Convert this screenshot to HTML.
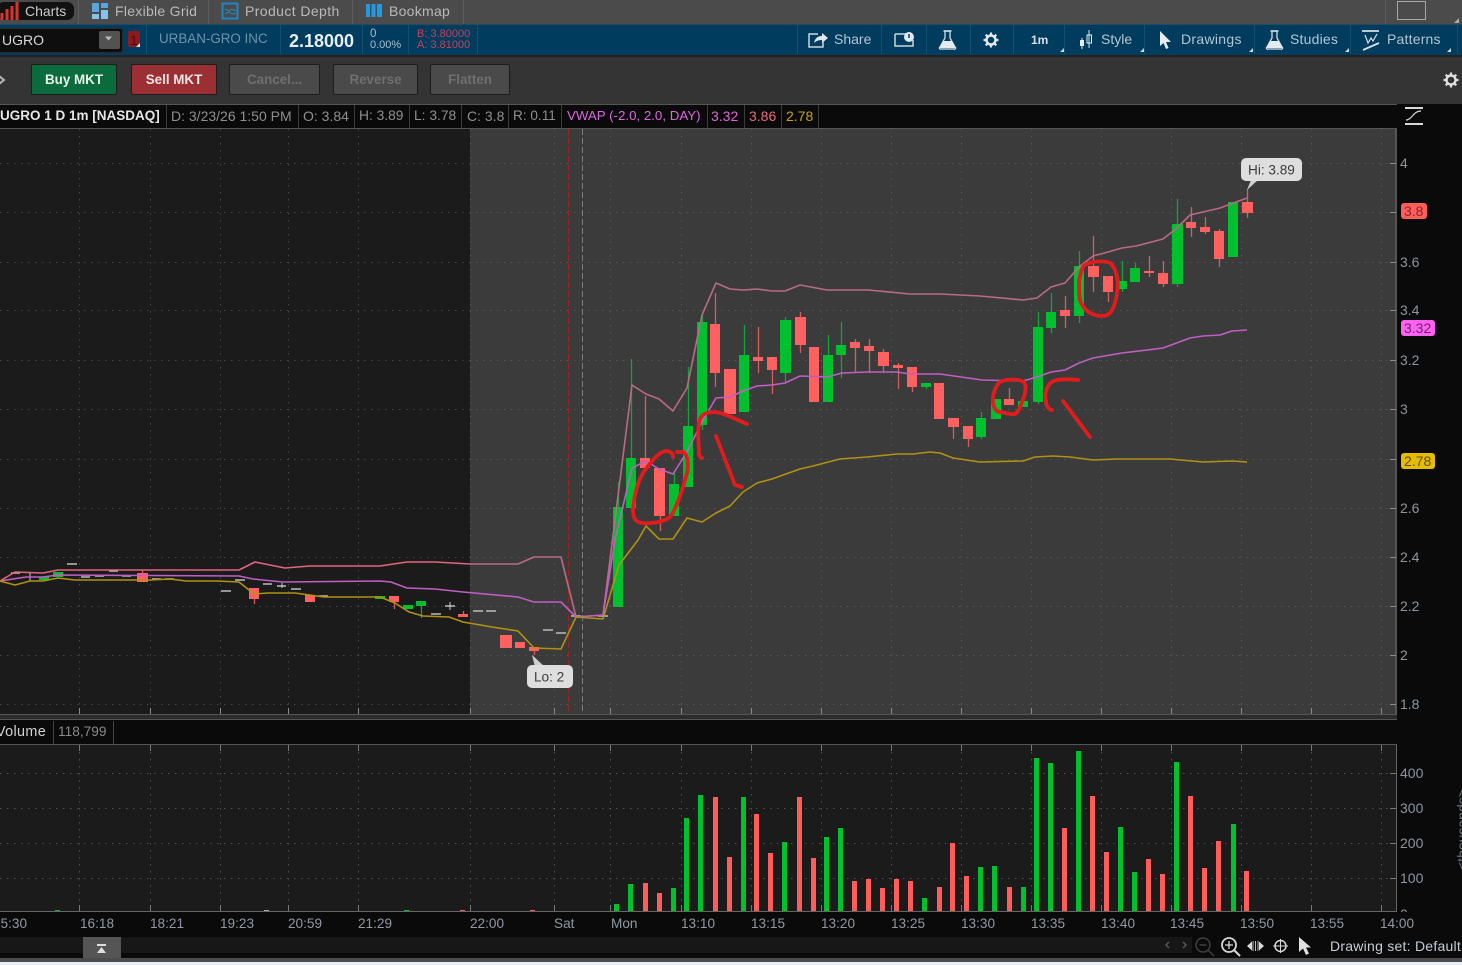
<!DOCTYPE html>
<html><head><meta charset="utf-8"><style>
html,body{margin:0;padding:0;background:#333;width:1462px;height:965px;overflow:hidden}
body{position:relative;font-family:"Liberation Sans",sans-serif;font-size:14px}
#w{position:absolute;left:0;top:0;width:1462px;height:965px;overflow:hidden;filter:blur(.35px)}
.a{position:absolute;white-space:nowrap;line-height:18px}
.r{position:absolute}
.b{position:absolute;top:64px;height:29px;line-height:29px;text-align:center;font-weight:bold;font-size:13.4px;border:1px solid #1c1c1c;border-radius:2px;background:#4a4a4a;color:#6f6f6f}
.h{top:107px;color:#8f8f8f}
.t{letter-spacing:.28px}
.u{letter-spacing:.2px}
.s{position:absolute;top:105px;height:23px;width:1px;background:#3c3c3c}
svg{position:absolute;left:0;top:0}
svg text{font-family:"Liberation Sans",sans-serif}
</style></head><body><div id="w">
<!-- tab bar -->
<div class="r" style="left:0;top:0;width:1462px;height:24px;background:#4b4b4b"></div>
<div class="r" style="left:-3px;top:2px;width:77px;height:18px;background:#111;border-radius:7px"></div>
<div class="r" style="left:78px;top:0;width:1px;height:24px;background:#5e5e5e"></div>
<div class="r" style="left:208px;top:0;width:1px;height:24px;background:#5e5e5e"></div>
<div class="r" style="left:352px;top:0;width:1px;height:24px;background:#5e5e5e"></div>
<div class="r" style="left:463px;top:0;width:1px;height:24px;background:#5e5e5e"></div>
<div class="r" style="left:1385px;top:0;width:1px;height:24px;background:#5e5e5e"></div>
<div class="a" style="left:25px;top:2px;color:#c9c9c9">Charts</div>
<div class="a t" style="left:115px;top:2px;color:#b9b9b9">Flexible Grid</div>
<div class="a t" style="left:245px;top:2px;letter-spacing:.4px;color:#b9b9b9">Product Depth</div>
<div class="a t" style="left:389px;top:2px;color:#b9b9b9">Bookmap</div>
<!-- blue bar -->
<div class="r" style="left:0;top:24px;width:1462px;height:31px;background:#003c5e;border-top:1px solid #234a60;box-sizing:border-box"></div>
<div class="r" style="left:-2px;top:28px;width:123px;height:23px;background:#0e0e0e;border:1px solid #2a2a2a;border-radius:3px"></div>
<div class="r" style="left:99px;top:31px;width:21px;height:18px;background:#525252;border-radius:2px"></div>
<div class="a" style="left:2px;top:31px;color:#d8d8d8">UGRO</div>
<div class="r" style="left:128px;top:31px;width:12px;height:16px;background:#8f1a1e;border-radius:2px"></div>
<div class="a" style="left:130px;top:31px;color:#4a0c0e;font-size:14px">1</div>
<div class="r" style="left:146px;top:25px;width:1px;height:29px;background:#13506f"></div>
<div class="r" style="left:280px;top:25px;width:1px;height:29px;background:#13506f"></div>
<div class="r" style="left:362px;top:25px;width:1px;height:29px;background:#13506f"></div>
<div class="r" style="left:408px;top:25px;width:1px;height:29px;background:#13506f"></div>
<div class="r" style="left:477px;top:25px;width:1px;height:29px;background:#13506f"></div>
<div class="a" style="left:159px;top:30px;color:#6f93ab;font-size:13.4px">URBAN-GRO INC</div>
<div class="a" style="left:289px;top:32px;color:#e6edf2;font-size:18px;font-weight:bold">2.18000</div>
<div class="a" style="left:370px;top:25px;color:#a9bfcd;font-size:11.5px">0</div>
<div class="a" style="left:370px;top:36px;color:#a9bfcd;font-size:11px">0.00%</div>
<div class="a" style="left:417px;top:25px;color:#c8425a;font-size:11px">B: 3.80000</div>
<div class="a" style="left:417px;top:36px;color:#c8425a;font-size:11px">A: 3.81000</div>
<div class="r" style="left:797px;top:25px;width:1px;height:29px;background:#13506f"></div>
<div class="r" style="left:881px;top:25px;width:1px;height:29px;background:#13506f"></div>
<div class="r" style="left:926px;top:25px;width:1px;height:29px;background:#13506f"></div>
<div class="r" style="left:970px;top:25px;width:1px;height:29px;background:#13506f"></div>
<div class="r" style="left:1013px;top:25px;width:1px;height:29px;background:#13506f"></div>
<div class="r" style="left:1064px;top:25px;width:1px;height:29px;background:#13506f"></div>
<div class="r" style="left:1144px;top:25px;width:1px;height:29px;background:#13506f"></div>
<div class="r" style="left:1254px;top:25px;width:1px;height:29px;background:#13506f"></div>
<div class="r" style="left:1350px;top:25px;width:1px;height:29px;background:#13506f"></div>
<div class="r" style="left:1457px;top:25px;width:1px;height:29px;background:#13506f"></div>
<div class="a" style="left:834px;top:30px;color:#b4c6d2">Share</div>
<div class="a" style="left:1031px;top:31px;color:#d5dfe5;font-size:12px;font-weight:bold">1m</div>
<div class="a" style="left:1101px;top:30px;color:#b4c6d2">Style</div>
<div class="a u" style="left:1181px;top:30px;letter-spacing:.3px;color:#b4c6d2">Drawings</div>
<div class="a u" style="left:1290px;top:30px;color:#b4c6d2">Studies</div>
<div class="a u" style="left:1387px;top:30px;color:#b4c6d2">Patterns</div>
<!-- order bar -->
<div class="r" style="left:0;top:55px;width:1462px;height:49px;background:#343434;border-top:2px solid #222;box-sizing:border-box"></div>
<div class="b" style="left:31px;width:84px;background:#0b6b3c;color:#e8f2ec">Buy MKT</div>
<div class="b" style="left:131px;width:84px;background:#9b3034;color:#f2e4e4">Sell MKT</div>
<div class="b" style="left:229px;width:89px">Cancel...</div>
<div class="b" style="left:333px;width:83px">Reverse</div>
<div class="b" style="left:430px;width:78px">Flatten</div>
<!-- right column bg -->
<div class="r" style="left:1397px;top:104px;width:65px;height:833px;background:#0a0a0a"></div>
<!-- header strip -->
<div class="r" style="left:0;top:104px;width:1397px;height:25px;background:#0a0a0a;border-top:1px solid #555;border-bottom:1px solid #555;box-sizing:border-box"></div>
<div class="a" style="left:0;top:107px;color:#e6e6e6;font-weight:bold;font-size:13.5px">UGRO 1 D 1m [NASDAQ]</div>
<div class="a h" style="left:171px">D: 3/23/26 1:50 PM</div>
<div class="a h" style="left:303px">O: 3.84</div>
<div class="a h" style="left:359px;font-size:13.8px">H: 3.89</div>
<div class="a h" style="left:414px;font-size:13.8px">L: 3.78</div>
<div class="a h" style="left:467px">C: 3.8</div>
<div class="a h" style="left:513px;font-size:13.6px">R: 0.11</div>
<div class="a h" style="left:567px;font-size:13.3px;color:#e062e0">VWAP (-2.0, 2.0, DAY)</div>
<div class="a h" style="left:711px;color:#e062e0">3.32</div>
<div class="a h" style="left:749px;color:#e86a7c">3.86</div>
<div class="a h" style="left:786px;color:#c8a200">2.78</div>
<div class="s" style="left:166px"></div><div class="s" style="left:298px"></div><div class="s" style="left:354px"></div><div class="s" style="left:409px"></div><div class="s" style="left:461px"></div><div class="s" style="left:508px"></div><div class="s" style="left:561px"></div><div class="s" style="left:707px"></div><div class="s" style="left:744px"></div><div class="s" style="left:781px"></div><div class="s" style="left:818px"></div>
<!-- chart panes -->
<div class="r" style="left:0;top:129px;width:470px;height:585px;background:#1b1b1b"></div>
<div class="r" style="left:470px;top:129px;width:926px;height:585px;background:#3b3b3b"></div>
<div class="r" style="left:1395px;top:129px;width:2px;height:585px;background:#555"></div>
<div class="r" style="left:0;top:714px;width:1397px;height:6px;background:#2c2c2c;border-top:1px solid #555;border-bottom:1px solid #555;box-sizing:border-box"></div>
<div class="r" style="left:0;top:720px;width:1397px;height:25px;background:#0a0a0a;border-bottom:1px solid #555;box-sizing:border-box"></div>
<div class="a" style="left:-4px;top:723px;letter-spacing:.35px;font-size:14.4px;color:#d2d2d2">Volume</div>
<div class="a" style="left:58px;top:723px;font-size:13.7px;color:#8a8a8a">118,799</div>
<div class="r" style="left:53px;top:721px;width:1px;height:23px;background:#444"></div>
<div class="r" style="left:113px;top:721px;width:1px;height:23px;background:#444"></div>
<div class="r" style="left:0;top:745px;width:1396px;height:166px;background:#1b1b1b"></div>
<div class="r" style="left:0;top:911px;width:1397px;height:1px;background:#666"></div>
<div class="r" style="left:1396px;top:745px;width:1px;height:167px;background:#666"></div>
<div class="r" style="left:0;top:937px;width:1462px;height:21px;background:#0a0a0a"></div>
<div class="r" style="left:0;top:937px;width:1192px;height:16px;background:#171717"></div>
<div class="r" style="left:83px;top:937px;width:38px;height:22px;background:#555"></div>
<div class="r" style="left:0;top:958px;width:1462px;height:4px;background:#4c4c4c"></div>
<div class="r" style="left:0;top:962px;width:1462px;height:3px;background:#e6eff8"></div>
<div class="a" style="left:1330px;top:937px;letter-spacing:.25px;color:#c4ced6">Drawing set: Default</div>

<svg width="1462" height="965" viewBox="0 0 1462 965" fill="none">
<defs><linearGradient id="ub" gradientUnits="userSpaceOnUse" x1="0" y1="0" x2="1247" y2="0"><stop offset="0" stop-color="#e2657f"/><stop offset=".37" stop-color="#e2657f"/><stop offset=".38" stop-color="#b96a84"/><stop offset="1" stop-color="#b96a84"/></linearGradient></defs>
<!-- toolbar icons -->
<path d="M2 20V13M7 20V9M12 20V6M17 20V2" stroke="#d8352c" stroke-width="3"/>
<g fill="#5aa6dc"><rect x="92" y="3" width="7" height="9"/><rect x="101" y="3" width="7" height="5"/><rect x="101" y="10" width="7" height="9" fill="#85c2ee"/><rect x="92" y="14" width="7" height="5" fill="#85c2ee"/></g>
<rect x="222.500" y="3.500" width="15" height="15" stroke="#1f86c4" stroke-width="2"/><path d="M225 9l4 2 3-2 4 2M225 14l4-2 3 2 4-1" stroke="#1f86c4"/>
<g fill="#1e9ae6"><rect x="366" y="4" width="4" height="13"/><rect x="371.500" y="4" width="4" height="13"/><rect x="377" y="4" width="5" height="13"/></g>
<path d="M105 36.500h7l-3.500 4z" fill="#bbb"/>
<path d="M140 47v-4l-4 4z" fill="#ddd"/>
<path d="M-1 76l5 4-5 4" stroke="#b5b5b5" stroke-width="2"/>
<rect x="1397.500" y="1.500" width="28" height="18" stroke="#a8a8a8"/>
<path d="M1459 23v-5l-5 5z" fill="#aaa"/>
<!-- share -->
<path d="M818 34h-9v13h14v-5" stroke="#c8d6de" stroke-width="1.500"/><path d="M814 43c1-5 4-7 8-7v-3l6 5-6 5v-3c-3 0-6 1-8 3z" fill="#dfe8ee"/>
<!-- calendar -->
<path d="M895 34h11M895 34v12h18v-6" stroke="#c8d6de" stroke-width="1.500"/><circle cx="909" cy="37" r="5" fill="#dfe8ee"/><path d="M909 34v4" stroke="#003c5e" stroke-width="1.500"/>
<!-- flasks -->
<path d="M945 31h5v7l5 9a1 1 0 0 1-1 2h-13a1 1 0 0 1-1-2l5-9z" stroke="#d5dfe5" stroke-width="1.300"/><path d="M943 41h9l3 7h-15z" fill="#e4ecf0"/><path d="M943.500 31h8" stroke="#d5dfe5" stroke-width="1.500"/>
<path d="M1272 31h5v7l5 9a1 1 0 0 1-1 2h-13a1 1 0 0 1-1-2l5-9z" stroke="#d5dfe5" stroke-width="1.300"/><path d="M1270 41h9l3 7h-15z" fill="#e4ecf0"/><path d="M1270.500 31h8" stroke="#d5dfe5" stroke-width="1.500"/>
<!-- gears -->
<g stroke="#e2e9ee" stroke-width="2.200"><path d="M991 32.500v15M983.500 40h15M985.700 34.700l10.600 10.600M996.300 34.700l-10.600 10.600"/></g><circle cx="991" cy="40" r="4.500" stroke="#e2e9ee" stroke-width="2.500" fill="#003c5e"/>
<g stroke="#e0e0e0" stroke-width="2.200"><path d="M1451 72.500v15M1443.500 80h15M1445.700 74.700l10.600 10.600M1456.300 74.700l-10.600 10.600"/></g><circle cx="1451" cy="80" r="4.500" stroke="#e0e0e0" stroke-width="2.400" fill="#343434"/>
<!-- candle icon -->
<path d="M1082 38v11M1089 30v18" stroke="#d5dfe5"/><rect x="1080" y="40" width="4" height="6" fill="#e4ecf0"/><rect x="1087" y="35" width="4.500" height="8" stroke="#e4ecf0"/>
<!-- arrow -->
<path d="M1160 31v15l3.500-3 2.500 6 2.500-1-2.500-6h5z" fill="#e6edf2"/>
<!-- patterns -->
<path d="M1362 31h17M1363 50l16-7" stroke="#d5dfe5" stroke-width="1.800"/><path d="M1365 35l3 8 3-5 2 3 4-7" stroke="#d5dfe5" stroke-width="1.200"/>
<g fill="#cfdbe2"><path d="M1064 52v-4l-4 4zM1144 52v-4l-4 4zM1253 52v-4l-4 4zM1349 52v-4l-4 4zM1451 52v-4l-4 4z"/></g>
<!-- side icon -->
<path d="M1405 108h18M1405 124h18" stroke="#d8d8d8" stroke-width="2"/><path d="M1406 120c6 0 7-9 15-9" stroke="#d8d8d8" stroke-width="1.200"/>

<!-- dotted grid -->
<g stroke="#6a6a6a" stroke-dasharray="1.500 5.500" opacity=".55">
<path d="M0 163.500H1395M0 212.500H1395M0 262.500H1395M0 310.500H1395M0 360.500H1395M0 409.500H1395M0 459.500H1395M0 508.500H1395M0 557.500H1395M0 606.500H1395M0 655.500H1395M0 704.500H1395"/>
<path d="M79.500 129V713M150.500 129V713M220.500 129V713M288.500 129V713M358.500 129V713M470.500 129V713M554.500 129V713M610.500 129V713M681.500 129V713M751.500 129V713M821.500 129V713M891.500 129V713M961.500 129V713M1031.500 129V713M1101.500 129V713M1171.500 129V713M1241.500 129V713M1311.500 129V713M1381.500 129V713"/>
</g>
<path d="M568.500 129V713" stroke="#a52020" stroke-dasharray="6 3"/>
<path d="M582.500 129V713" stroke="#7c7c7c" stroke-dasharray="6 3"/>
<path d="M79.500 708V714M150.500 708V714M220.500 708V714M288.500 708V714M358.500 708V714M470.500 708V714M554.500 708V714M610.500 708V714M681.500 708V714M751.500 708V714M821.500 708V714M891.500 708V714M961.500 708V714M1031.500 708V714M1101.500 708V714M1171.500 708V714M1241.500 708V714M1311.500 708V714M1381.500 708V714" stroke="#8a8a8a"/>
<path d="M1390 163.500h6M1390 212.500h6M1390 262.500h6M1390 310.500h6M1390 360.500h6M1390 409.500h6M1390 459.500h6M1390 508.500h6M1390 557.500h6M1390 606.500h6M1390 655.500h6M1390 704.500h6" stroke="#8a8a8a"/>

<!-- grey doji dashes -->
<path d="M11 573h9M67 564h10M81 577h9M95 576h9M109 571h9M122 576h9M152 579h9M165 579h9M221 591h10M235 580h10M263 584h9M277 586h9M291 589h10M319 596h9M431 614h10M445 606h10M473 611h10M486 611h10M543 630h10M556 633h10M571 616h10M598 616h10" stroke="#bdbdbd" stroke-width="1.500"/>
<path d="M30 572v9M282 583v5M450 602v8" stroke="#cfcfcf"/>

<!-- wicks -->
<path d="M618.500 482V507M631.500 359V458M674.500 473V516M688.500 367V426M702.500 315V322M702.500 425V430M744.500 325V355M785.500 317V320M785.500 373V383M828.500 335V355M841.500 322V345M841.500 355V378M926.500 383V389M981.500 412V439M1038.500 312V327M1038.500 402V404M1051.500 293V333M1079.500 251V323M1122.500 261V292M1135.500 263V268M1177.500 199V287M421.500 606V618M380.500 596V599" stroke="#12a43a" stroke-width="1.300"/>
<path d="M645.500 396V458M660.500 516V531M715.500 293V324M715.500 373V387M758.500 327V373M772.500 370V394M800.500 312V317M800.500 345V353M855.500 339V373M869.500 339V372M883.500 349V372M898.500 363V389M912.500 387V392M953.500 427V439M968.500 439V447M1009.500 388V399M1065.500 296V328M1093.500 236V292M1108.500 292V302M1149.500 256V277M1163.500 261V287M1191.500 207V237M1205.500 217V234M1219.500 229V267M1247.500 189V218M142.500 570V573M254.500 599V604M394.500 602V609M463.500 611V614M534.500 651V655" stroke="#d95c5c" stroke-width="1.300"/>

<!-- green bodies -->
<g fill="#00c030">
<rect x="613" y="507" width="10" height="100"/><rect x="626" y="458" width="10" height="50"/><rect x="669" y="484" width="10" height="32"/><rect x="683" y="426" width="10" height="61"/><rect x="697" y="322" width="10" height="103"/><rect x="739" y="355" width="10" height="57"/><rect x="780" y="320" width="11" height="53"/><rect x="823" y="355" width="10" height="47"/><rect x="836" y="345" width="10" height="10"/><rect x="921" y="383" width="10" height="4"/><rect x="976" y="418" width="10" height="19"/><rect x="991" y="399" width="10" height="20"/><rect x="1018" y="401" width="10" height="6"/><rect x="1033" y="327" width="10" height="75"/><rect x="1046" y="312" width="10" height="16"/><rect x="1074" y="266" width="10" height="50"/><rect x="1117" y="281" width="10" height="8"/><rect x="1130" y="268" width="10" height="14"/><rect x="1172" y="224" width="11" height="60"/><rect x="1228" y="202" width="10" height="55"/>
<rect x="39" y="577" width="10" height="3"/><rect x="53" y="572" width="10" height="5"/><rect x="375" y="596" width="10" height="3"/><rect x="403" y="605" width="10" height="4"/><rect x="416" y="601" width="10" height="5"/>
</g>
<!-- red bodies -->
<g fill="#ff6060">
<rect x="640" y="458" width="10" height="10"/><rect x="654" y="468" width="11" height="48"/><rect x="710" y="324" width="10" height="49"/><rect x="724" y="369" width="12" height="45"/><rect x="753" y="357" width="10" height="4"/><rect x="767" y="357" width="10" height="13"/><rect x="795" y="317" width="11" height="28"/><rect x="809" y="347" width="10" height="55"/><rect x="850" y="342" width="10" height="6"/><rect x="864" y="346" width="10" height="5"/><rect x="878" y="352" width="11" height="14"/><rect x="893" y="365" width="10" height="3"/><rect x="907" y="367" width="10" height="20"/><rect x="934" y="383" width="10" height="36"/><rect x="948" y="418" width="11" height="9"/><rect x="963" y="426" width="10" height="13"/><rect x="1004" y="399" width="10" height="6"/><rect x="1060" y="310" width="10" height="6"/><rect x="1088" y="266" width="11" height="11"/><rect x="1103" y="276" width="10" height="16"/><rect x="1144" y="271" width="10" height="2"/><rect x="1158" y="273" width="10" height="11"/><rect x="1186" y="222" width="10" height="6"/><rect x="1200" y="227" width="10" height="5"/><rect x="1214" y="231" width="10" height="28"/><rect x="1242" y="202" width="11" height="11"/>
<rect x="137" y="573" width="11" height="9"/><rect x="249" y="588" width="10" height="11"/><rect x="305" y="595" width="10" height="7"/><rect x="389" y="596" width="10" height="6"/><rect x="458" y="614" width="10" height="3"/><rect x="500" y="635" width="12" height="13"/><rect x="515" y="642" width="10" height="6"/><rect x="529" y="647" width="10" height="4"/>
</g>

<!-- bands -->
<path d="M0 581L15 572L43 573L58 570L239 570L255 562L285 568L310 566L380 566L407 562L435 562L470 564L518 564L534 557L561 557L576 617L603 615L632 385L646 394L659 399L673 411L687 388L702 315L716 283L730 289L743 290L757 289L772 291L785 291L800 285L827 290L868 290L910 294L940 294L980 296L1023 300L1037 298L1051 287L1065 283L1079 267L1093 256L1108 252L1122 248L1136 246L1163 239L1177 228L1190 215L1203 212L1220 208L1247 198" stroke="url(#ub)" stroke-width="1.600" stroke-linejoin="round"/>
<path d="M0 581L26 577L43 577L58 575L239 576L253 579L283 582L380 581L391 582L407 588L435 589L463 592L518 597L534 602L561 602L576 617L603 615L615 540L632 468L646 461L659 469L673 474L687 452L702 422L716 398L730 397L743 391L757 386L772 385L785 383L800 376L827 377L842 373L868 372L897 372L910 374L940 374L982 380L1023 381L1037 377L1051 372L1065 370L1079 363L1093 358L1122 353L1147 350L1163 348L1190 338L1203 336L1220 335L1232 331L1247 330" stroke="#bf5fc4" stroke-width="1.600" stroke-linejoin="round"/>
<path d="M0 581L15 585L30 581L43 581L58 578L75 580L150 580L170 579L186 581L217 581L239 582L254 594L268 593L295 593L324 597L380 597L395 603L409 612L423 616L449 617L463 622L492 627L518 631L534 648L561 649L576 617L603 619L619 565L638 540L646 526L659 539L673 539L687 518L702 522L716 513L730 506L743 492L757 483L772 479L800 469L813 466L840 459L867 457L897 454L913 454L930 452L940 453L953 458L980 462L1023 461L1035 457L1053 456L1070 457L1093 460L1117 459L1170 459L1203 462L1232 461L1247 462" stroke="#b09212" stroke-width="1.600" stroke-linejoin="round"/>

<!-- red annotations -->
<g stroke="#e21c1c" stroke-width="3.800" stroke-linecap="round" stroke-linejoin="round">
<path d="M673 457Q673 451 665 451C657 453 648 466 643 473C637 483 634 497 633 510C633 519 636 522 642 523C650 524 664 522 670 517C676 510 683 488 687 473C689 462 687 454 683 452L677 452"/>
<path d="M702 458Q698 456 699 450C698 437 698 428 699 423C700 415 705 412 715 412C725 413 737 420 747 424"/>
<path d="M716 436L728 467L735 485L742 487"/>
<path d="M1022 381C1017 379 1005 379 1000 382C995 386 992 396 993 403C994 409 997 412 1000 412C1006 413 1012 415 1015 414C1018 412 1019 409 1020 407C1023 400 1025 395 1025 392C1026 387 1026 383 1022 381"/>
<path d="M1052 410C1048 409 1046 405 1046 402C1045 396 1045 392 1046 392C1047 386 1050 383 1052 382C1056 379 1068 379 1078 380"/>
<path d="M1063 401L1090 437"/>
<path d="M1093 262C1088 263 1084 265 1083 267C1080 274 1079 280 1079 283C1079 292 1079 300 1081 303C1084 309 1087 311 1090 313C1094 315 1099 316 1102 316C1107 316 1111 313 1112 310C1115 305 1116 299 1117 293C1118 287 1118 281 1117 277C1116 271 1113 265 1110 263C1106 261 1098 261 1093 262"/>
</g>

<!-- Hi / Lo labels -->
<path d="M1251 180L1247 190L1258 180z" fill="#cfcfcf"/>
<rect x="1241" y="158" width="61" height="23" rx="5" fill="#dedede"/>
<text x="1248" y="174.500" font-size="13.6" fill="#3c3c3c">Hi: 3.89</text>
<path d="M535 667L532 655L545 667z" fill="#cfcfcf"/>
<rect x="527" y="665" width="46" height="23" rx="5" fill="#dedede"/>
<text x="534" y="681.500" font-size="13.6" fill="#3c3c3c">Lo: 2</text>

<!-- price axis -->
<g font-size="14" fill="#8b96a3">
<text x="1400" y="168">4</text><text x="1400" y="267">3.6</text><text x="1400" y="315">3.4</text><text x="1400" y="365">3.2</text><text x="1400" y="414">3</text><text x="1400" y="513">2.6</text><text x="1400" y="562">2.4</text><text x="1400" y="611">2.2</text><text x="1400" y="660">2</text><text x="1400" y="709">1.8</text>
<text x="1400" y="778">400</text><text x="1400" y="813">300</text><text x="1400" y="848">200</text><text x="1400" y="883">100</text><text x="1400" y="919">0</text>
</g>
<rect x="1401" y="203" width="26" height="16" rx="3" fill="#ff5c5c"/><text x="1404" y="216" font-size="14" fill="#8a2424">3.8</text>
<rect x="1401" y="320" width="34" height="16" rx="3" fill="#ff62f0"/><text x="1404" y="333" font-size="14" fill="#6c2470">3.32</text>
<rect x="1401" y="453" width="34" height="16" rx="3" fill="#e6bc00"/><text x="1404" y="466" font-size="14" fill="#5f4e00">2.78</text>
<text transform="translate(1467 870) rotate(-90)" font-size="14" fill="#6b7680">&lt;thousands&gt;</text>

<!-- volume grid -->
<g stroke="#5a5a5a" stroke-dasharray="1.500 5.500" opacity=".85">
<path d="M0 773.500H1396M0 808.500H1396M0 843.500H1396M0 878.500H1396"/>
<path d="M79.500 745V911M150.500 745V911M220.500 745V911M288.500 745V911M358.500 745V911M470.500 745V911M554.500 745V911M610.500 745V911M681.500 745V911M751.500 745V911M821.500 745V911M891.500 745V911M961.500 745V911M1031.500 745V911M1101.500 745V911M1171.500 745V911M1241.500 745V911M1311.500 745V911M1381.500 745V911"/>
</g>
<path d="M79.500 745v6M150.500 745v6M220.500 745v6M288.500 745v6M358.500 745v6M470.500 745v6M554.500 745v6M610.500 745v6M681.500 745v6M751.500 745v6M821.500 745v6M891.500 745v6M961.500 745v6M1031.500 745v6M1101.500 745v6M1171.500 745v6M1241.500 745v6M1311.500 745v6M1381.500 745v6M79.500 905v6M150.500 905v6M220.500 905v6M288.500 905v6M358.500 905v6M470.500 905v6M554.500 905v6M610.500 905v6M681.500 905v6M751.500 905v6M821.500 905v6M891.500 905v6M961.500 905v6M1031.500 905v6M1101.500 905v6M1171.500 905v6M1241.500 905v6M1311.500 905v6M1381.500 905v6" stroke="#777"/>
<path d="M1390 773.500h6M1390 808.500h6M1390 843.500h6M1390 878.500h6" stroke="#777"/>
<!-- volume bars -->
<g fill="#00c030">
<rect x="55" y="910" width="5" height="1"/><rect x="404" y="910" width="5" height="1"/><rect x="614" y="904" width="5" height="7"/><rect x="628" y="884" width="5" height="27"/><rect x="671" y="888" width="5" height="23"/><rect x="684" y="818" width="5" height="93"/><rect x="698" y="795" width="5" height="116"/><rect x="741" y="797" width="5" height="114"/><rect x="782" y="842" width="5" height="69"/><rect x="824" y="837" width="5" height="74"/><rect x="838" y="828" width="5" height="83"/><rect x="922" y="898" width="5" height="13"/><rect x="978" y="867" width="5" height="44"/><rect x="992" y="866" width="5" height="45"/><rect x="1021" y="887" width="5" height="24"/><rect x="1034" y="758" width="5" height="153"/><rect x="1048" y="763" width="5" height="148"/><rect x="1076" y="751" width="5" height="160"/><rect x="1118" y="827" width="5" height="84"/><rect x="1132" y="872" width="5" height="39"/><rect x="1174" y="762" width="5" height="149"/><rect x="1231" y="824" width="5" height="87"/>
</g>
<g fill="#ff5c5c">
<rect x="460" y="910" width="5" height="1"/><rect x="530" y="910" width="5" height="1"/><rect x="643" y="883" width="5" height="28"/><rect x="657" y="893" width="5" height="18"/><rect x="713" y="797" width="5" height="114"/><rect x="727" y="857" width="5" height="54"/><rect x="754" y="814" width="5" height="97"/><rect x="768" y="853" width="5" height="58"/><rect x="797" y="797" width="5" height="114"/><rect x="811" y="858" width="5" height="53"/><rect x="852" y="881" width="5" height="30"/><rect x="866" y="879" width="5" height="32"/><rect x="880" y="888" width="5" height="23"/><rect x="894" y="879" width="5" height="32"/><rect x="908" y="881" width="5" height="30"/><rect x="937" y="887" width="5" height="24"/><rect x="950" y="843" width="5" height="68"/><rect x="964" y="876" width="5" height="35"/><rect x="1007" y="887" width="5" height="24"/><rect x="1062" y="828" width="5" height="83"/><rect x="1090" y="796" width="5" height="115"/><rect x="1104" y="852" width="5" height="59"/><rect x="1146" y="859" width="5" height="52"/><rect x="1160" y="874" width="5" height="37"/><rect x="1188" y="796" width="5" height="115"/><rect x="1202" y="868" width="5" height="43"/><rect x="1216" y="841" width="5" height="70"/><rect x="1244" y="871" width="5" height="40"/>
</g>
<rect x="264" y="910" width="5" height="1" fill="#aaa"/>
<!-- x axis band hides the clipped 0 label -->
<rect x="0" y="912" width="1462" height="25" fill="#0a0a0a"/>
<g font-size="13.6" fill="#8d9aa6">
<text x="-7" y="928">15:30</text><text x="80" y="928">16:18</text><text x="150" y="928">18:21</text><text x="220" y="928">19:23</text><text x="288" y="928">20:59</text><text x="358" y="928">21:29</text><text x="470" y="928">22:00</text><text x="554" y="928">Sat</text><text x="611" y="928">Mon</text><text x="681" y="928">13:10</text><text x="751" y="928">13:15</text><text x="821" y="928">13:20</text><text x="891" y="928">13:25</text><text x="961" y="928">13:30</text><text x="1031" y="928">13:35</text><text x="1101" y="928">13:40</text><text x="1170" y="928">13:45</text><text x="1240" y="928">13:50</text><text x="1310" y="928">13:55</text><text x="1380" y="928">14:00</text>
</g>
<!-- bottom controls -->
<path d="M97 945h9" stroke="#ddd" stroke-width="2"/><path d="M101.500 947l-4.500 6h9z" fill="#ddd"/>
<path d="M1169 942l-3 3 3 3M1183 942l3 3-3 3" stroke="#555" stroke-width="1.500"/>
<circle cx="1203" cy="945" r="7" stroke="#3f3f3f" stroke-width="1.500"/><path d="M1208 950l6 6M1199.500 945h7" stroke="#3f3f3f" stroke-width="1.500"/>
<circle cx="1229" cy="945" r="7" stroke="#d8d8d8" stroke-width="1.800"/><path d="M1234 950l6 6" stroke="#d8d8d8" stroke-width="2"/><path d="M1225 945h8M1229 941v8" stroke="#d8d8d8" stroke-width="1.300"/>
<path d="M1247 946l5-4.500v9zM1264 946l-5-4.500v9z" fill="#dcdcdc"/><path d="M1253 941v10M1255.500 941v10M1258 941v10" stroke="#bbb"/>
<circle cx="1280.500" cy="946" r="5.500" stroke="#d8d8d8" stroke-width="1.500"/><path d="M1273 946h15M1280.500 939v14" stroke="#d8d8d8"/>
<path d="M1299 937v15l4-3.500 3 6.500 3-1.500-3-6h5z" fill="#e0e0e0"/>
</svg>
</div></body></html>
